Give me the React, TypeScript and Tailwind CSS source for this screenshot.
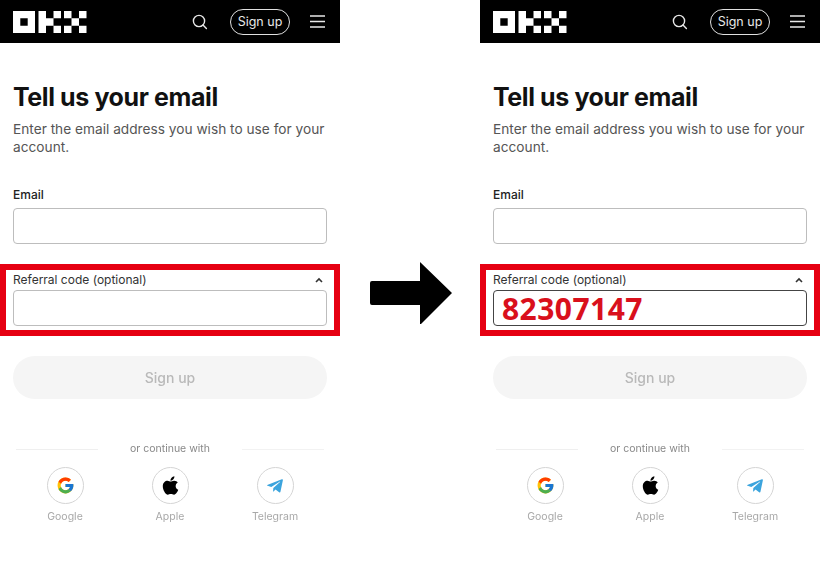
import React from "react";
import { FcGoogle } from "react-icons/fc";
import { FaApple, FaTelegramPlane } from "react-icons/fa";

function Logo() {
  return (
    <svg width="74" height="22" viewBox="0 0 74 22" fill="#fff">
      <path fillRule="evenodd" d="M0 0h22v22H0zM7.3 7.3v7.4h7.4V7.3z" />
      <path d="M25.5 0H33v22h-7.5zM33 7.3h7.5v7.4H33zM40.5 0H48v7.3h-7.5zM40.5 14.7H48V22h-7.5zM51 0h7.5v7.3H51zM51 14.7h7.5V22H51zM58.5 7.3H66v7.4h-7.5zM66 0h7.5v7.3H66zM66 14.7h7.5V22H66z" />
    </svg>
  );
}

function Header() {
  return (
    <div className="h-[43px] bg-black flex items-center pl-[13px] pr-[15px]">
      <Logo />
      <svg className="ml-auto" width="16" height="16" viewBox="0 0 16 16" fill="none" stroke="#e8e8e8" strokeWidth="1.4">
        <circle cx="7" cy="7" r="5.6" />
        <path d="M11 11l3.4 3.4" strokeLinecap="round" />
      </svg>
      <div className="ml-[22px] w-[60px] h-[26px] rounded-full border border-[#e0e0e0] flex items-center justify-center text-[12.5px] text-[#e8e8e8] pt-[1px]">
        Sign up
      </div>
      <svg className="ml-[20px]" width="15" height="13" viewBox="0 0 15 13" stroke="#e8e8e8" strokeWidth="1.3">
        <path d="M0 1h15M0 6.5h15M0 12h15" />
      </svg>
    </div>
  );
}

function Social({ label, children }: { label: string; children: React.ReactNode }) {
  return (
    <div className="w-[60px] flex flex-col items-center">
      <div className="w-[37px] h-[37px] rounded-full border border-[#d4d4d4] flex items-center justify-center">
        {children}
      </div>
      <div className="mt-[6px] text-[10.5px] leading-[14px] text-[#a8a8a8] whitespace-nowrap">{label}</div>
    </div>
  );
}

function Panel({ code }: { code?: string }) {
  return (
    <div className="w-[340px] shrink-0">
      <Header />
      <div className="px-[13px] pt-[38px]">
        <h1 className="text-[25px] leading-[32px] font-bold text-[#111] tracking-[-0.4px]">Tell us your email</h1>
        <p className="mt-[7px] text-[13.7px] leading-[18px] text-[#555]">
          Enter the email address you wish to use for your account.
        </p>
        <div className="mt-[31px] text-[12px] leading-[16px] font-medium text-[#222]">Email</div>
        <div className="mt-[5px] h-[36px] rounded-[4px] border border-[#bdbdbd]" />
      </div>
      <div className="mt-[20px] h-[72px] border-[6px] border-[#e60012] px-[7px] pt-[2px]">
        <div className="flex items-center justify-between h-[16px] pr-[1px] text-[12px] leading-[16px] text-[#333]">
          <span>Referral code (optional)</span>
          <svg width="10" height="6" viewBox="0 0 10 6" fill="none" stroke="#333" strokeWidth="1.6" className="mr-[2px]">
            <path d="M2 5l3-3 3 3" />
          </svg>
        </div>
        <div
          className={
            "mt-[2px] h-[36px] rounded-[4px] flex items-center pl-[8px] " +
            (code ? "border-[1.5px] border-[#444] pt-[2px]" : "border border-[#bdbdbd]")
          }
        >
          {code && (
            <span className="text-[30px] leading-[32px] font-bold text-[#d9101c] font-['Noto_Sans',sans-serif] tracking-[0.45px]">
              {code}
            </span>
          )}
        </div>
      </div>
      <div className="px-[13px] pt-[20px]">
        <div className="h-[43px] rounded-full bg-[#f5f5f5] flex items-center justify-center text-[14px] font-medium text-[#b9b9b9] blur-[0.3px]">
          Sign up
        </div>
        <div className="mt-[43px] flex items-center h-[14px] px-[3px] blur-[0.3px]">
          <div className="flex-1 h-px bg-[#efefef]" />
          <span className="px-[32px] text-[10.5px] text-[#888] whitespace-nowrap">or continue with</span>
          <div className="flex-1 h-px bg-[#f2f2f2]" />
        </div>
        <div className="mt-[11px] flex justify-between px-[22px] blur-[0.3px]">
          <Social label="Google">
            <FcGoogle size={19} />
          </Social>
          <Social label="Apple">
            <FaApple size={21} color="#000" />
          </Social>
          <Social label="Telegram">
            <FaTelegramPlane size={18} color="#3ba4dd" />
          </Social>
        </div>
      </div>
    </div>
  );
}

export default function App() {
  return (
    <div className="w-[820px] h-[584px] bg-white overflow-hidden flex font-['Inter','Liberation_Sans',sans-serif]">
      <Panel />
      <div className="w-[140px] shrink-0 flex justify-center pt-[262px] pl-[2px]">
        <svg width="82" height="62" viewBox="0 0 82 62" fill="#000">
          <path d="M2 19h48V0l32 31-32 32V43H2a2 2 0 0 1-2-2V21a2 2 0 0 1 2-2z" />
        </svg>
      </div>
      <Panel code="82307147" />
    </div>
  );
}
